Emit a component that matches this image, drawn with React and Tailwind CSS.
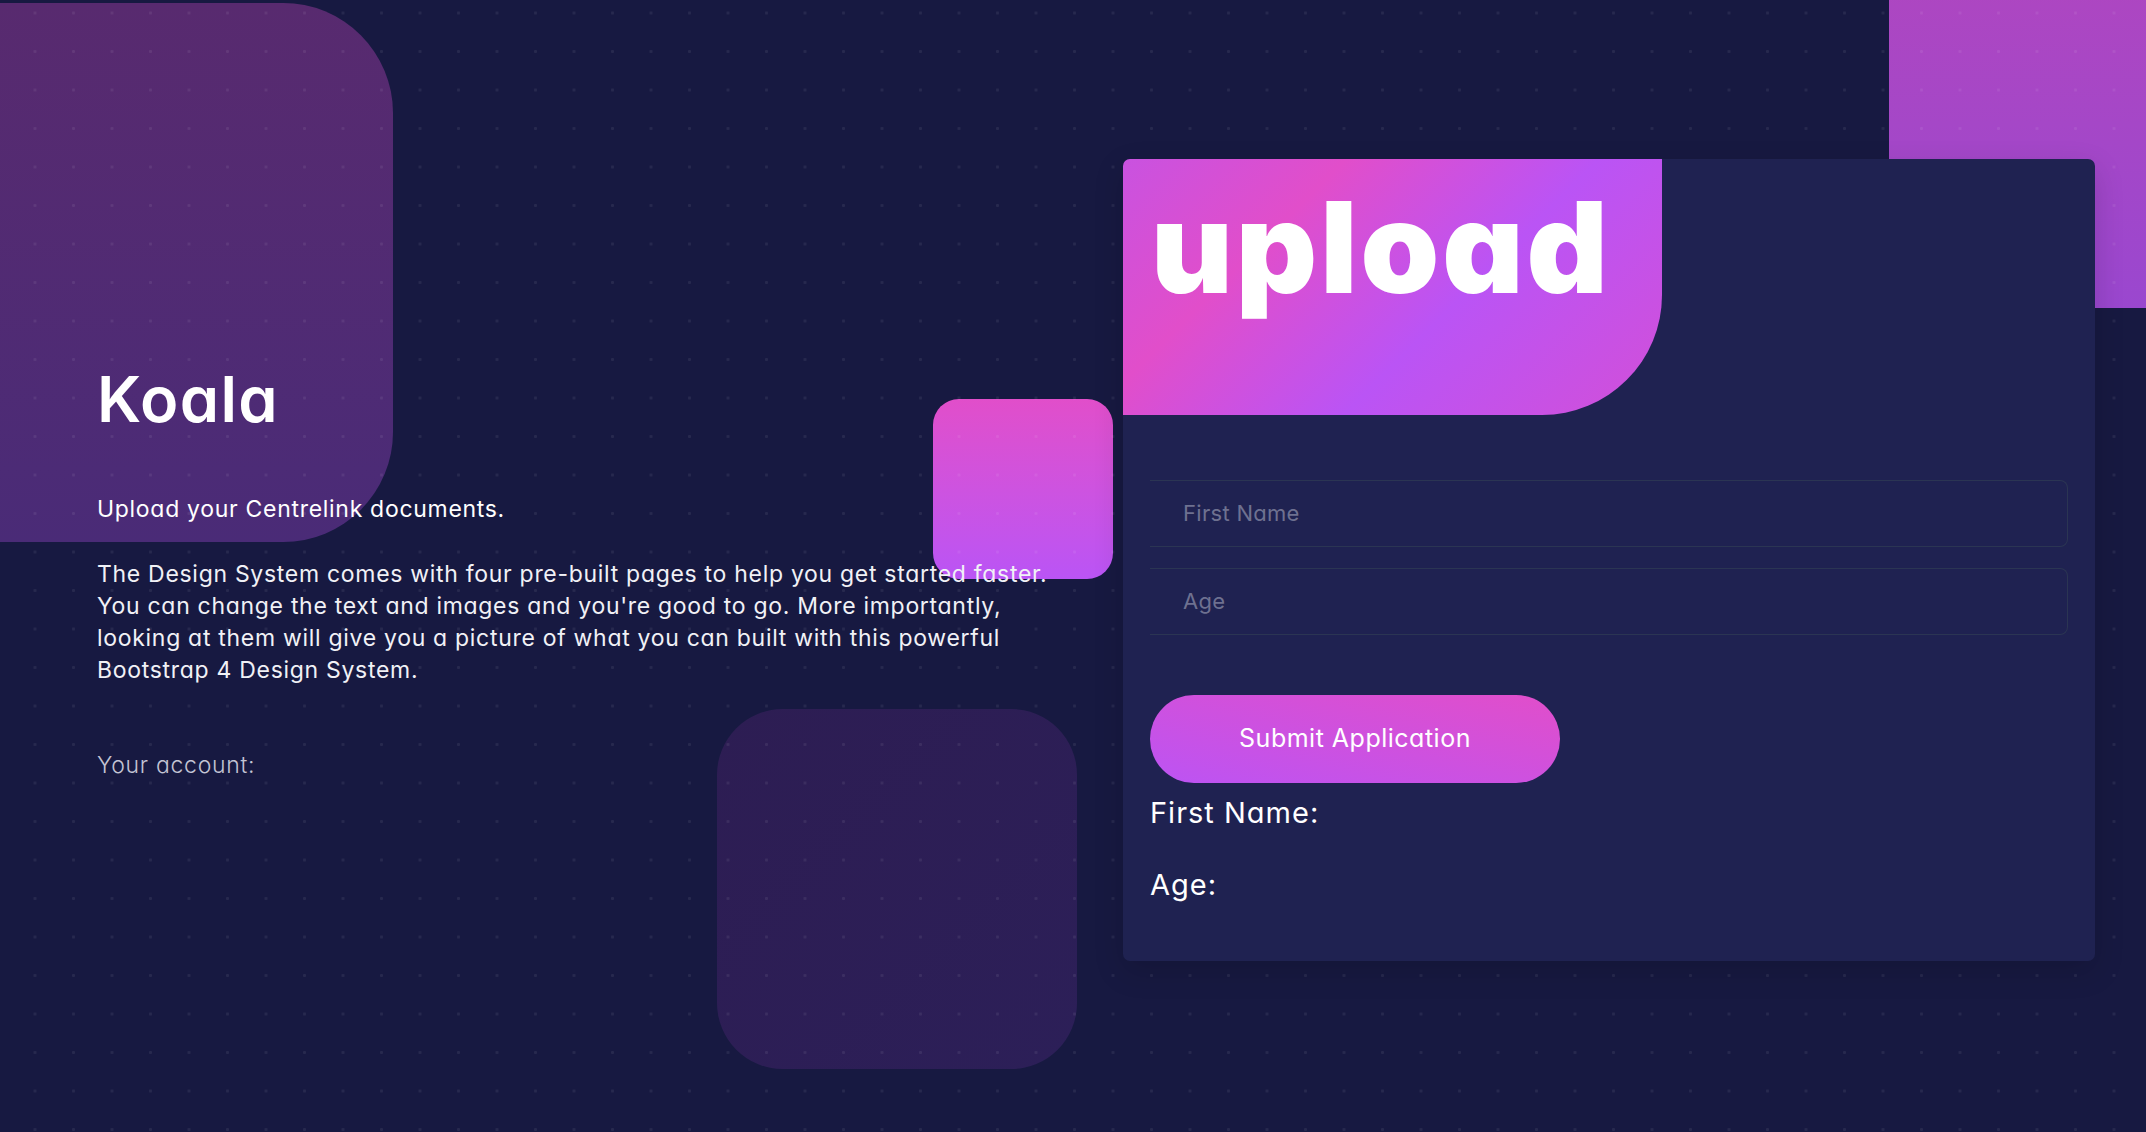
export default function App() {
  return (
    <div className="relative h-[1132px] w-full overflow-hidden bg-[#171941] font-['Inter','Noto_Sans',sans-serif] text-white [font-feature-settings:'cv11']">
      {/* decorative squares behind everything */}
      <div className="absolute left-[-120px] top-[3px] h-[539px] w-[513px] rounded-[110px] bg-linear-to-b from-[#582a6f] to-[#4a2b77]" />
      <div className="absolute left-[1889px] top-[-60px] h-[368px] w-[320px] rounded-[40px] bg-linear-to-b from-[#b046bf] to-[#9a47cf]" />
      <div className="absolute left-[717px] top-[709px] h-[360px] w-[360px] rounded-[66px] bg-linear-to-br from-[#2d1d53] to-[#2c1f58]" />
      <div className="absolute left-[933px] top-[399px] h-[180px] w-[180px] rounded-[26px] bg-linear-to-b from-[#e14eca] to-[#ba54f5]" />

      {/* dot grid */}
      <div className="pointer-events-none absolute inset-0 bg-[radial-gradient(circle,rgba(255,255,255,0.07)_1.3px,transparent_1.8px)] [background-position:15.75px_-6.25px] [background-size:38.5px_38.5px]" />

      <div className="relative flex pl-[97px]">
        {/* left column */}
        <div className="w-[960px] pt-[368px]">
          <h1 className="text-[63px] font-semibold leading-none tracking-[1.3px]">Koala</h1>
          <p className="mt-[62px] text-[23px] leading-[32px] tracking-[0.7px]">Upload your Centrelink documents.</p>
          <p className="mt-[33px] text-[23px] leading-[32px] tracking-[0.7px] text-[#f1f1f6]">
            <span className="block whitespace-nowrap">The Design System comes with four pre-built pages to help you get started faster.</span>
            <span className="block whitespace-nowrap">You can change the text and images and you're good to go. More importantly,</span>
            <span className="block whitespace-nowrap">looking at them will give you a picture of what you can built with this powerful</span>
            <span className="block whitespace-nowrap">Bootstrap 4 Design System.</span>
          </p>
          <p className="mt-[63px] text-[23px] font-light leading-[32px] tracking-[0.7px] text-[#c3c4d4]">Your account:</p>
        </div>

        {/* card */}
        <div className="ml-[66px] mt-[159px] flex h-[802px] w-[972px] flex-col overflow-hidden rounded-[7px] bg-[#1f2251] shadow-[0_10px_30px_rgba(0,0,0,0.15)]">
          <div className="h-[256px] w-[539px] rounded-br-[120px] bg-[linear-gradient(135deg,#c952e0_0%,#e14eca_28%,#ba54f5_60%,#d24fd8_100%)] pl-[28px] pt-[25px]">
            <h2 className="text-[126px] font-black leading-none tracking-[3px]">upload</h2>
          </div>

          <div className="flex flex-col px-[27px] pt-[65px]">
            <div className="flex h-[67px] items-center rounded-r-lg border border-l-0 border-[#2b3553] pl-[33px]">
              <input
                placeholder="First Name"
                className="w-full bg-transparent text-[22px] tracking-[0.3px] text-white outline-none placeholder:text-[#6e7190]"
              />
            </div>
            <div className="mt-[21px] flex h-[67px] items-center rounded-r-lg border border-l-0 border-[#2b3553] pl-[33px]">
              <input
                placeholder="Age"
                className="w-full bg-transparent text-[22px] tracking-[0.3px] text-white outline-none placeholder:text-[#6e7190]"
              />
            </div>

            <button className="mt-[60px] h-[88px] w-[410px] rounded-full bg-[linear-gradient(to_bottom_left,#e14eca,#ba54f5,#e14eca)] [background-position:top_right] [background-size:210%_210%] text-[25px] tracking-[0.5px] text-white">
              Submit Application
            </button>

            <p className="mt-[10px] text-[29px] leading-[40px] tracking-[1px]">First Name:</p>
            <p className="mt-[32px] text-[29px] leading-[40px] tracking-[1px]">Age:</p>
          </div>
        </div>
      </div>
    </div>
  )
}
